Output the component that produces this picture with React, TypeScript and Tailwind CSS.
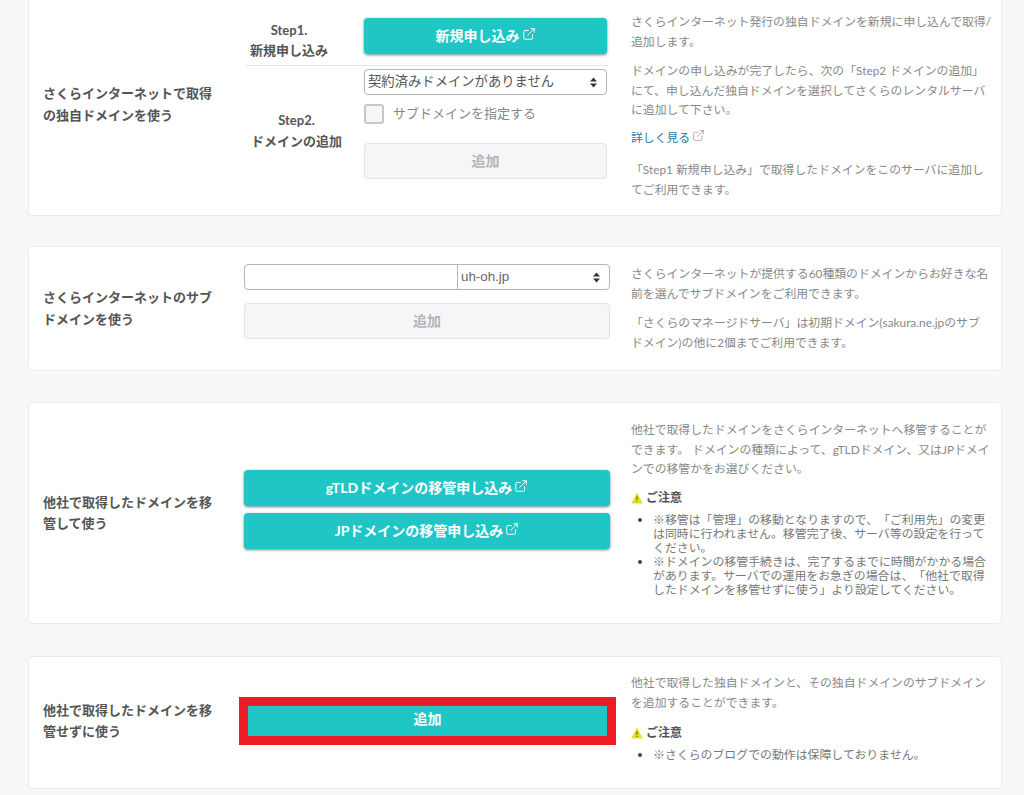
import { ExternalLink } from "lucide-react";
import type { ReactNode } from "react";

const FONT = "font-['Lato','Noto_Sans_CJK_JP',sans-serif]";

function Card({ className, children }: { className: string; children: ReactNode }) {
  return (
    <section
      className={`flex w-[974px] rounded border border-[#ececec] bg-white pl-[14px] ${className}`}
    >
      {children}
    </section>
  );
}

function Label({ children, className = "" }: { children: ReactNode; className?: string }) {
  return (
    <div className={`flex w-[201px] shrink-0 items-center ${className}`}>
      <p className="w-[180px] text-[13px] font-bold leading-[21.5px] text-[#555]">{children}</p>
    </div>
  );
}

function TealButton({ label, className = "" }: { label: string; className?: string }) {
  return (
    <button
      className={`flex h-9 w-full items-center justify-center gap-0.5 rounded bg-[#20c6c6] text-sm font-bold text-white shadow-[0_1px_3px_rgba(0,60,60,0.6)] ${className}`}
    >
      {label}
      <ExternalLink size={14} strokeWidth={1.6} className="mb-1" />
    </button>
  );
}

function DisabledButton({ className = "" }: { className?: string }) {
  return (
    <button className={`flex h-9 w-full items-center justify-center rounded border border-[#e3e3e6] bg-[#f6f6f8] text-sm font-bold text-[#b4b4b4] ${className}`}>
      追加
    </button>
  );
}

function Arrows() {
  return (
    <svg width="7" height="11" viewBox="0 0 7 11" className="shrink-0 fill-[#333]">
      <path d="M3.5 0.5 7 4.5H0ZM3.5 10.5 0 6.5H7Z" />
    </svg>
  );
}

function Warning() {
  return (
    <svg width="12" height="12" viewBox="0 0 12 12" className="shrink-0">
      <path d="M6 0.5 11.8 11.5H0.2Z" fill="#dde32a" />
      <path d="M5.5 4.2H6.5V8H5.5ZM5.5 8.9H6.5V10H5.5Z" fill="#55552a" />
    </svg>
  );
}

function Notice({ items }: { items: string[] }) {
  return (
    <div>
      <p className="flex items-center gap-[3px] text-xs font-bold leading-5 text-[#555]">
        <Warning />
        ご注意
      </p>
      <ul className="mt-[5px] list-disc pl-[22px] text-[11.9px] leading-[14px] text-[#777] marker:text-[#444]">
        {items.map((t) => (
          <li key={t}>{t}</li>
        ))}
      </ul>
    </div>
  );
}

function Desc({ className = "", children }: { className?: string; children: ReactNode }) {
  return <div className={`ml-[21px] w-[362px] text-[11.85px] leading-[19.5px] text-[#888] ${className}`}>{children}</div>;
}

export default function App() {
  return (
    <div className={`h-[795px] w-[1024px] overflow-hidden bg-[#f8f8f8] pl-[28px] [text-spacing-trim:space-all] ${FONT}`}>
      {/* 独自ドメイン — card is cut off by the top of the page */}
      <Card className="h-[216px] rounded-t-none border-t-0">
        <Label className="pb-[6px]">
          さくらインターネットで取得の独自ドメインを使う
        </Label>
        <div className="w-[366px] shrink-0 pt-[18px] pr-[3px]">
          <div className="ml-[2px] flex h-[48px] border-b border-[#e4e4e4]">
            <div className="w-[118px] shrink-0 pt-[2px] pr-[32px] text-center text-[13px] font-bold leading-5 text-[#555]">
              Step1.
              <br />
              <span className="whitespace-nowrap">新規申し込み</span>
            </div>
            <TealButton label="新規申し込み" />
          </div>
          <div className="ml-[2px] flex">
            <div className="w-[118px] shrink-0 pt-[44px] pr-[17px] text-center text-[13px] font-bold leading-[21px] text-[#555]">
              Step2.
              <br />
              <span className="whitespace-nowrap">ドメインの追加</span>
            </div>
            <div className="w-[243px] pt-[3px]">
              <div className="flex h-[26px] items-center justify-between rounded border border-[#b5b5b5] pr-[9px] pl-[3px] text-[13.33px] text-[#555]">
                契約済みドメインがありません
                <Arrows />
              </div>
              <label className="mt-[9px] flex h-5 items-center gap-[9px] text-[13px] text-[#888]">
                <span className="h-5 w-5 rounded-[3px] border-2 border-[#c8c8c8] bg-[#f6f6f8]" />
                サブドメインを指定する
              </label>
              <DisabledButton className="mt-[19px]" />
            </div>
          </div>
        </div>
        <Desc className="pt-[12px]">
          <p>さくらインターネット発行の独自ドメインを新規に申し込んで取得/追加します。</p>
          <p className="mt-[10px]">
            ドメインの申し込みが完了したら、次の「Step2 ドメインの追加」にて、申し込んだ独自ドメインを選択してさくらのレンタルサーバに追加して下さい。
          </p>
          <p className="mt-[8px] flex items-center gap-0.5 text-[#2b7aa8]">
            詳しく見る
            <ExternalLink size={13} strokeWidth={1.2} className="mb-1 text-[#888]" />
          </p>
          <p className="mt-[13px]">「Step1 新規申し込み」で取得したドメインをこのサーバに追加してご利用できます。</p>
        </Desc>
      </Card>

      {/* サブドメイン */}
      <Card className="mt-[30px] h-[125px]">
        <Label>さくらインターネットのサブドメインを使う</Label>
        <div className="w-[366px] shrink-0 pt-[17px]">
          <div className="flex h-[26px] rounded border border-[#b5b5b5]">
            <div className="w-[213px] border-r border-[#b5b5b5]" />
            <div className="flex flex-1 items-center justify-between pr-[9px] pl-[3px] font-['Liberation_Sans',sans-serif] text-[13.33px] text-[#666]">
              uh-oh.jp
              <Arrows />
            </div>
          </div>
          <DisabledButton className="mt-[13px]" />
        </div>
        <Desc className="pt-[17px]">
          <p>さくらインターネットが提供する60種類のドメインからお好きな名前を選んでサブドメインをご利用できます。</p>
          <p className="mt-[10px]">
            「さくらのマネージドサーバ」は初期ドメイン(sakura.ne.jpのサブ
            <br />
            ドメイン)の他に2個までご利用できます。
          </p>
        </Desc>
      </Card>

      {/* 移管 */}
      <Card className="mt-[31px] h-[222px]">
        <Label>他社で取得したドメインを移管して使う</Label>
        <div className="w-[366px] shrink-0 pt-[67px]">
          <TealButton label="gTLDドメインの移管申し込み" />
          <TealButton label="JPドメインの移管申し込み" className="mt-[7px]" />
        </div>
        <Desc className="pt-[17px]">
          <p>
            他社で取得したドメインをさくらインターネットへ移管することができます。 ドメインの種類によって、gTLDドメイン、又はJPドメインでの移管かをお選びください。
          </p>
          <div className="mt-[9px]">
            <Notice
              items={[
                "※移管は「管理」の移動となりますので、「ご利用先」の変更は同時に行われません。移管完了後、サーバ等の設定を行ってください。",
                "※ドメインの移管手続きは、完了するまでに時間がかかる場合があります。サーバでの運用をお急ぎの場合は、「他社で取得したドメインを移管せずに使う」より設定してください。",
              ]}
            />
          </div>
        </Desc>
      </Card>

      {/* 移管せずに使う */}
      <Card className="mt-[32px] h-[133px]">
        <Label className="pb-[3px]">他社で取得したドメインを移管せずに使う</Label>
        <div className="w-[366px] shrink-0 pt-[40px]">
          <div className="-mr-[6px] -ml-[5px] border-[9px] border-[#ed1c24]">
            <button className="flex h-[30px] w-full items-center justify-center bg-[#20c6c6] pb-[4px] text-sm font-bold text-white">
              追加
            </button>
          </div>
        </div>
        <Desc className="pt-[16px]">
          <p>他社で取得した独自ドメインと、その独自ドメインのサブドメインを追加することができます。</p>
          <div className="mt-[11px]">
            <Notice items={["※さくらのブログでの動作は保障しておりません。"]} />
          </div>
        </Desc>
      </Card>
    </div>
  );
}
